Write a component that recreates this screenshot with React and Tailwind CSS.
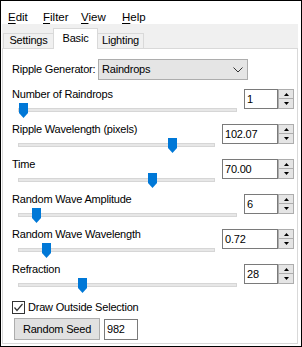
import React from "react";

function Thumb({ left }) {
  return (
    <svg
      className="absolute top-[2px]"
      style={{ left: left }}
      width="9"
      height="15"
      viewBox="0 0 9 15"
    >
      <polygon points="0,0 9,0 9,10 4.5,15 0,10" fill="#0078d7" />
    </svg>
  );
}

function SpinButtons() {
  return (
    <div className="flex w-[16px] flex-col">
      <div className="flex h-[10px] items-center justify-center border border-[#adadad] bg-[#e5e5e5]">
        <svg width="5" height="3" viewBox="0 0 5 3">
          <polygon points="2.5,0 5,3 0,3" fill="#000" />
        </svg>
      </div>
      <div className="flex h-[10px] items-center justify-center border border-t-0 border-[#adadad] bg-[#e5e5e5]">
        <svg width="5" height="3" viewBox="0 0 5 3">
          <polygon points="0,0 5,0 2.5,3" fill="#000" />
        </svg>
      </div>
    </div>
  );
}

function Group({ label, value, wide, thumb }) {
  return (
    <div className="flex h-[35px] pr-[3px]">
      <div className="flex flex-1 flex-col">
        <div className="h-[13px] pl-[9px] leading-[13px]">{label}</div>
        <div className="relative h-[22px]">
          <div className="absolute left-[15px] right-0 top-[7px] h-[4px] border border-[#d6d6d6] bg-[#e7e7e7]" />
          <Thumb left={thumb} />
        </div>
      </div>
      <div className="ml-[7px] mt-[1px] flex h-[20px]">
        <div
          className={
            (wide ? "w-[56px]" : "w-[34px]") +
            " h-[20px] border border-[#7a7a7a] bg-white pl-[2px] pt-[3px] leading-[13px]"
          }
        >
          {value}
        </div>
        <SpinButtons />
      </div>
    </div>
  );
}

export default function App() {
  return (
    <div
      className="h-[347px] w-[302px] overflow-hidden border border-black bg-white text-[11px] text-black tracking-[-0.2px]"
      style={{ fontFamily: '"Liberation Sans", Arial, sans-serif' }}
    >
      {/* Menu bar */}
      <div className="flex h-[23px] pl-[7px] pt-[9px] text-[11.5px] leading-[14px] tracking-normal">
        <span className="w-[35px]">
          <u className="underline-offset-2">E</u>dit
        </span>
        <span className="w-[38px]">
          <u className="underline-offset-2">F</u>ilter
        </span>
        <span className="w-[41px]">
          <u className="underline-offset-2">V</u>iew
        </span>
        <span>
          <u className="underline-offset-2">H</u>elp
        </span>
      </div>

      <div className="ml-[1px] w-[296px]">
        {/* Tab header band */}
        <div className="flex h-[24px] items-end bg-[#f0f0f0] pl-[1px]">
          <div className="flex h-[15px] w-[50px] justify-center border-l border-t border-[#d9d9d9] bg-[#f0f0f0] leading-[12px]">
            Settings
          </div>
          <div className="relative z-10 -mb-[1px] flex h-[21px] w-[45px] justify-center border-l border-r border-t border-[#d9d9d9] bg-white pt-[3px] leading-[12px]">
            Basic
          </div>
          <div className="flex h-[15px] w-[46px] justify-center border-r border-t border-[#d9d9d9] bg-[#f0f0f0] leading-[12px]">
            Lighting
          </div>
        </div>

        {/* Panel */}
        <div className="h-[296px] border border-[#d9d9d9] bg-white">
          <div className="mt-[10px] flex h-[21px] items-center pl-[9px]">
            <div className="w-[86px] leading-[13px]">Ripple Generator:</div>
            <div className="flex h-[21px] w-[150px] items-center justify-between border border-[#adadad] bg-[#e5e5e5] pl-[3px] pr-[3px]">
              <span className="leading-[13px]">Raindrops</span>
              <svg width="10" height="6" viewBox="0 0 10 6" className="mr-[1px]">
                <polyline
                  points="0.5,0.5 5,5 9.5,0.5"
                  fill="none"
                  stroke="#333"
                  strokeWidth="1"
                />
              </svg>
            </div>
          </div>

          <div className="mt-[8px] flex flex-col">
            <Group label="Number of Raindrops" value="1" thumb={16} />
            <Group
              label="Ripple Wavelength (pixels)"
              value="102.07"
              wide
              thumb={165}
            />
            <Group label="Time" value="70.00" wide thumb={145} />
            <Group label="Random Wave Amplitude" value="6" thumb={29} />
            <Group
              label="Random Wave Wavelength"
              value="0.72"
              wide
              thumb={39}
            />
            <Group label="Refraction" value="28" thumb={75} />
          </div>

          <div className="mt-[2px] flex h-[15px] items-center pl-[9px]">
            <div className="flex h-[13px] w-[13px] items-center justify-center border border-[#333] bg-white">
              <svg width="11" height="11" viewBox="0 0 11 11">
                <polyline
                  points="1.5,5.5 4,8.5 9.5,2"
                  fill="none"
                  stroke="#333"
                  strokeWidth="1.2"
                />
              </svg>
            </div>
            <span className="ml-[3px] leading-[13px]">Draw Outside Selection</span>
          </div>

          <div className="mt-[3px] flex h-[22px] items-start pl-[11px]">
            <div className="flex h-[22px] w-[86px] items-center justify-center border border-[#adadad] bg-[#e1e1e1] leading-[13px]">
              Random Seed
            </div>
            <div className="ml-[4px] mt-[1px] h-[21px] w-[34px] border border-[#7a7a7a] bg-white pl-[2px] pt-[3px] leading-[13px]">
              982
            </div>
          </div>
        </div>
      </div>
    </div>
  );
}
